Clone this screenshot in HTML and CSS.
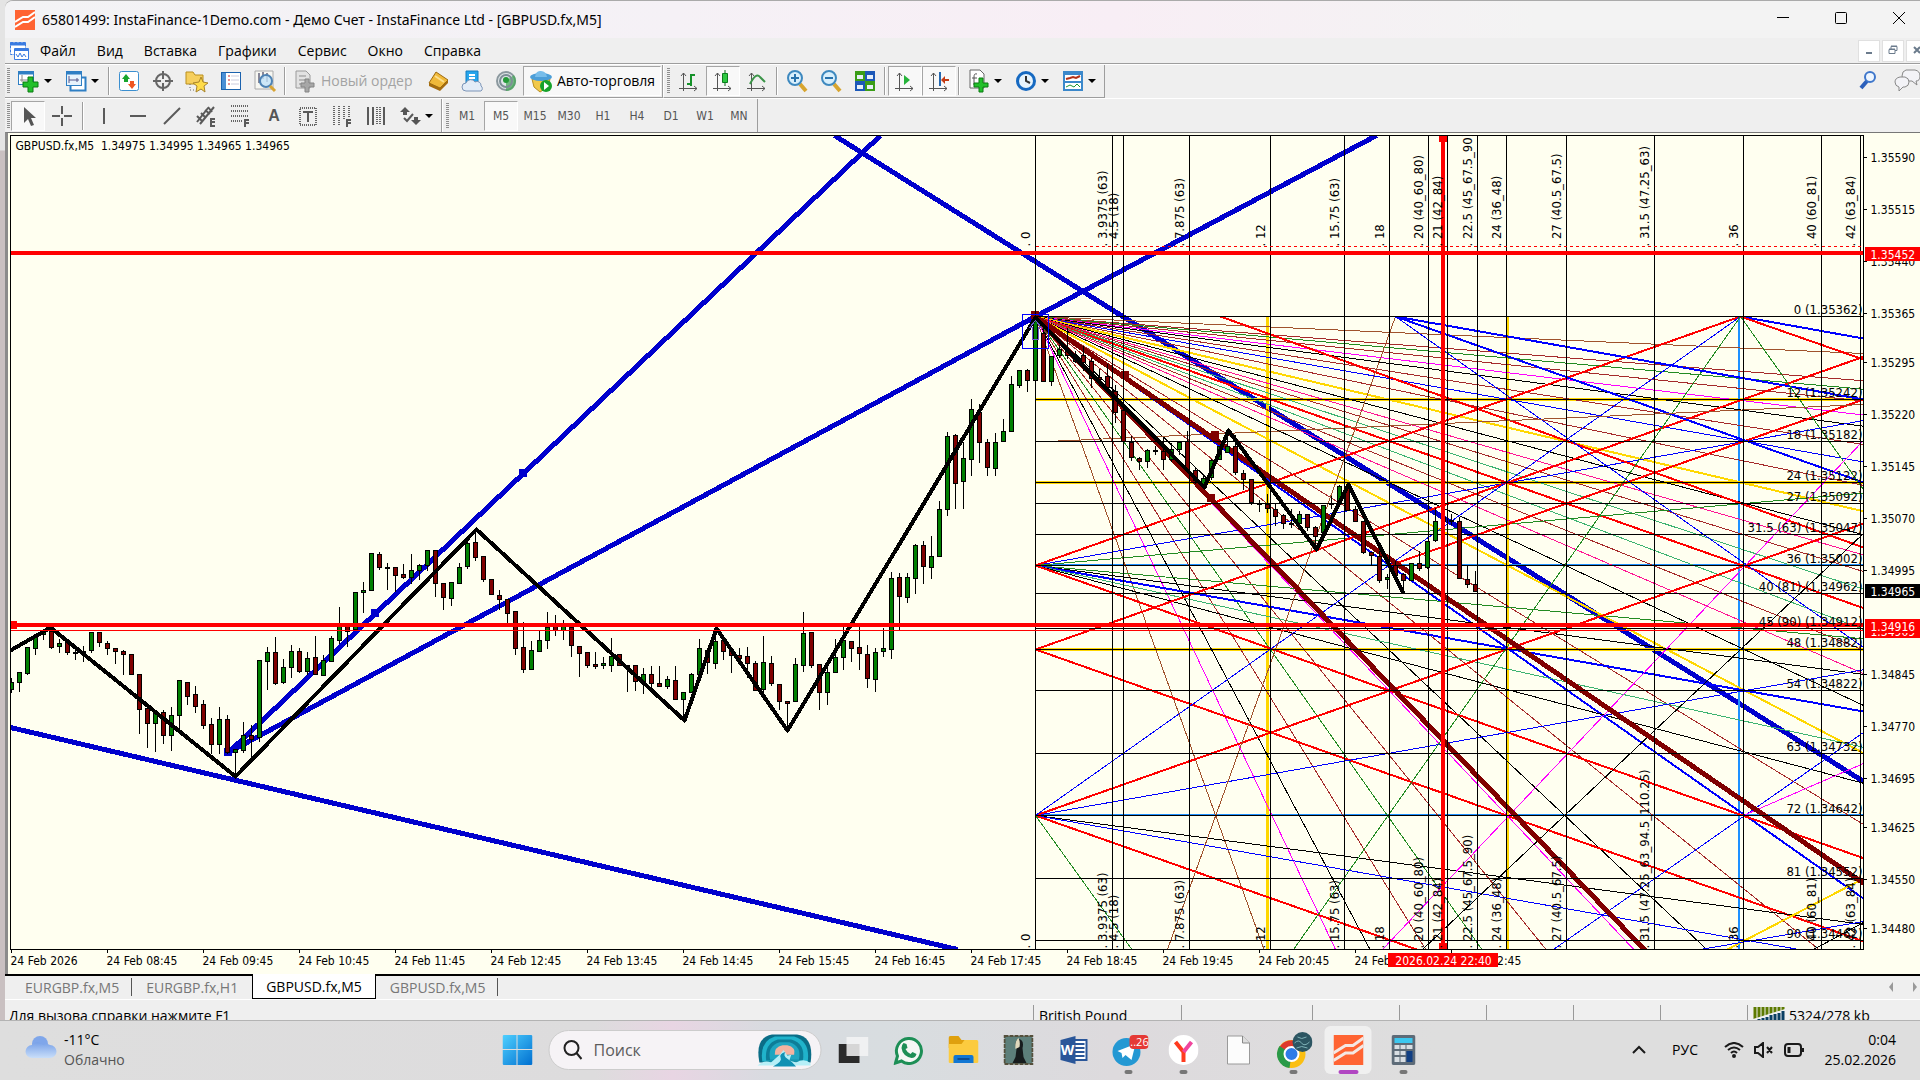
FILE: index.html
```html
<!DOCTYPE html>
<html lang="ru">
<head>
  <meta charset="utf-8">
  <title>65801499: InstaFinance-1Demo.com</title>
  <link rel="stylesheet" href="styles.css">
</head>
<body>
  <div class="window">
    <header class="titlebar">
      <svg class="logo" width="20" height="20" viewBox="0 0 20 20"><path fill="#ff6433" d="M0 0h20v20H0z"/><path fill="none" stroke="#fff" stroke-width="2" d="M0 12l8-5h5l7-5M0 17l8-5h5l7-5"/></svg>
      <h1>65801499: InstaFinance-1Demo.com - Демо Счет - InstaFinance Ltd - [GBPUSD.fx,M5]</h1>
      <div class="win-buttons">
        <button aria-label="Свернуть"><svg width="14" height="14"><path d="M1 6.500h12"/></svg></button>
        <button aria-label="Развернуть"><svg width="14" height="14"><rect x="1.500" y="1.500" width="11" height="11" rx="1"/></svg></button>
        <button aria-label="Закрыть"><svg width="14" height="14"><path d="M1 1l12 12M13 1L1 13"/></svg></button>
      </div>
    </header>

    <nav class="menubar">
      <svg class="menu-icon" width="20" height="20"><g fill="#fff" stroke="#3a7be0"><path d="M1.500 1.500h15v12h-15z" stroke-dasharray="3 1"/><path d="M1 3h16" stroke-width="3"/><path d="M5.500 7.500h14v11h-14z"/><path d="M6 8.500h13" stroke-width="3"/><path fill="none" d="M7 13l2 3 2-4 2 4 2-3 2 3"/></g></svg>
      <button>Файл</button>
      <button>Вид</button>
      <button>Вставка</button>
      <button>Графики</button>
      <button>Сервис</button>
      <button>Окно</button>
      <button>Справка</button>
      <div class="mdi-buttons">
        <button aria-label="Свернуть окно"><svg width="12" height="12"><path d="M3 9h6" stroke-width="2"/></svg></button>
        <button aria-label="Восстановить окно"><svg width="12" height="12"><path d="M2 5.500h6v4H2zM4 5V2.500h6v4H8M2 5h6M4 2h6"/></svg></button>
        <button aria-label="Закрыть окно"><svg width="12" height="12"><path d="M3 3l6 6M9 3l-6 6" stroke-width="2"/></svg></button>
      </div>
    </nav>

    <div class="toolbar">
      <div class="band">
        <span class="grip"></span>
        <button class="tool drop" aria-label="Новый график"><svg width="24" height="24"><rect x="1.500" y="2.500" width="15" height="13" fill="#fff" stroke="#2f7fc4"/><path d="M1 4h16" stroke="#2f7fc4" stroke-width="3"/><path d="M5 6v7M3 11h11" stroke="#888"/><path d="M11 8h5v5h5v5h-5v5h-5v-5H6v-5h5z" fill="#22c02a" stroke="#0a7a12"/></svg></button>
        <button class="tool drop" aria-label="Профили"><svg width="24" height="24"><rect x="6.500" y="8.500" width="15" height="13" fill="#fff" stroke="#2f7fc4" stroke-width="2"/><rect x="2.500" y="2.500" width="15" height="14" fill="#e8f3fc" stroke="#2f7fc4"/><path d="M2 4h16" stroke="#2f7fc4" stroke-width="3"/><path d="M5 7v7M5 11h10M13 9v4" stroke="#558" fill="none"/></svg></button>
        <span class="sep"></span>
        <button class="tool" aria-label="Обзор рынка"><svg width="24" height="24"><rect x="2.500" y="2.500" width="19" height="19" rx="2" fill="#fff" stroke="#3b8fd0"/><path d="M9 5l4 5h-2v3H7v-3H5z" fill="#18a52c"/><path d="M15 20l-4-5h2v-3h4v3h2z" fill="#ef5520"/></svg></button>
        <button class="tool" aria-label="Окно данных"><svg width="24" height="24"><g fill="none" stroke="#666" stroke-width="2"><circle cx="12" cy="12" r="7"/><path d="M12 2v8M12 14v8M2 12h8M14 12h8"/></g></svg></button>
        <button class="tool" aria-label="Навигатор"><svg width="24" height="24"><path d="M1 3h7l2 3h8v9H1z" fill="#f6cf5e" stroke="#b98f1e"/><path d="M5 15v6h5" stroke="#666" fill="none" stroke-dasharray="1 2"/><path d="M16 8l2 5 5 1-4 3 1 6-4-3-5 3 1-6-4-3 6-1z" fill="#ffdc4a" stroke="#a8842a"/></svg></button>
        <button class="tool" aria-label="Терминал"><svg width="24" height="24"><rect x="2.500" y="3.500" width="19" height="17" fill="#fff" stroke="#1b62ae"/><path d="M5 4v16" stroke="#4b8fd4" stroke-width="4"/><path d="M9 7h2M9 11h2M9 15h2" stroke="#c22"/><path d="M12 7h8M12 11h8M12 15h8" stroke="#ccd"/></svg></button>
        <button class="tool" aria-label="Тестер стратегий"><svg width="24" height="24"><path d="M2 2h18v18H2z" fill="#f7f7f2" stroke="#aaa"/><path d="M6 4v10M10 3v7M14 4v9" stroke="#889" stroke-width="2"/><circle cx="13" cy="12" r="6" fill="#bfe1f8" fill-opacity=".8" stroke="#4d82b4" stroke-width="2"/><path d="M17 17l5 5" stroke="#d9a534" stroke-width="3"/></svg></button>
        <span class="sep"></span>
        <button class="tool wide" disabled><svg width="24" height="24"><path d="M3 2h10l4 4v13H3z" fill="#e2e2e2" stroke="#9a9a9a"/><path d="M6 7h7M6 11h7M6 15h4" stroke="#8d8d8d"/><path d="M12 10h4v4h5v4h-5v5h-4v-5H8v-4h4z" fill="#a7a7a7" stroke="#858585"/></svg>Новый ордер</button>
        <button class="tool" aria-label="MetaEditor"><svg width="24" height="24"><path d="M3 14v3l11 5 8-8v-3z" fill="#a66d10"/><path d="M3 14L10 3l12 8-8 8z" fill="#f0b93a" stroke="#9e6b10"/><path d="M9 7l9 6" stroke="#fbdf8d" stroke-width="2"/></svg></button>
        <button class="tool" aria-label="VPS"><svg width="24" height="24"><path d="M6 2h12v16H6z" fill="#25a5ec" stroke="#157fc0"/><path d="M9 6h6M9 9h6" stroke="#fff" stroke-width="2"/><path d="M6 22a4 4 0 010-8 5 5 0 019-1 4 4 0 016 4 3 3 0 010 5z" fill="#e3ecf7" stroke="#7d95b7"/></svg></button>
        <button class="tool" aria-label="Сигналы"><svg width="24" height="24"><circle cx="12" cy="12" r="9" fill="#dfe5e8" stroke="#8b989e" stroke-width="2"/><path d="M12 12v10a10 10 0 008-16z" fill="#41a854" fill-opacity=".7"/><circle cx="12" cy="12" r="6" fill="none" stroke="#7d8f96" stroke-width="2"/><circle cx="12" cy="11" r="3" fill="#259a39"/></svg></button>
        <button class="tool auto pressed"><svg width="24" height="24"><path d="M3 10h18l-2 8-8 5-6-5z" fill="#f2c94a" stroke="#b78e22"/><ellipse cx="12" cy="8" rx="11" ry="4" fill="#4b9ed8"/><path d="M6 8q1-7 6-6 5 0 6 6z" fill="#77bdea"/><circle cx="17" cy="17" r="6" fill="#17a22b"/><path d="M15 13l5 4-5 4z" fill="#fff"/></svg>Авто-торговля</button>
      </div>
      <div class="band">
        <span class="grip"></span>
        <button class="tool" aria-label="Бары"><svg width="24" height="24"><path class="ax" d="M6.500 4v18M2 19.500h18M4 7l2.500-3 2.500 3M17 17l3 2.500-3 2.500"/><path d="M14 5v12M14 6h4M10 15h4" stroke="#15922a" stroke-width="2"/></svg></button>
        <button class="tool pressed" aria-label="Японские свечи"><svg width="24" height="24"><path class="ax" d="M6.500 4v18M2 19.500h18M4 7l2.500-3 2.500 3M17 17l3 2.500-3 2.500"/><path d="M14 1v16" stroke="#0b6c1a"/><path d="M11.500 4.500h5v9h-5z" fill="#2dc940" stroke="#0b7c1d"/></svg></button>
        <button class="tool" aria-label="Линия"><svg width="24" height="24"><path class="ax" d="M6.500 4v18M2 19.500h18M4 7l2.500-3 2.500 3M17 17l3 2.500-3 2.500"/><path d="M5 15q6-12 10-7l5 5" fill="none" stroke="#3b9448" stroke-width="2"/></svg></button>
        <span class="sep"></span>
        <button class="tool" aria-label="Увеличить"><svg width="24" height="24"><path d="M15 15l6 7" stroke="#d7a52f" stroke-width="4"/><circle cx="10" cy="9" r="7" fill="#d8effc" stroke="#3e89bf" stroke-width="2"/><path d="M6 9h8M10 5v8" stroke="#2872ac" stroke-width="2"/></svg></button>
        <button class="tool" aria-label="Уменьшить"><svg width="24" height="24"><path d="M15 15l6 7" stroke="#d7a52f" stroke-width="4"/><circle cx="10" cy="9" r="7" fill="#d8effc" stroke="#3e89bf" stroke-width="2"/><path d="M6 9h8" stroke="#2872ac" stroke-width="2"/></svg></button>
        <button class="tool" aria-label="Плитка"><svg width="24" height="24"><path d="M2 2h10v10H2zM12 12h10v10H12z" fill="#3a9d17"/><path d="M12 2h10v10H12zM2 12h10v10H2z" fill="#1c58b8"/><path d="M4 6h6v4H4zM14 6h6v4h-6zM4 16h6v4H4zM14 16h6v4h-6z" fill="#e6f0fa"/></svg></button>
        <span class="sep"></span>
        <button class="tool pressed" aria-label="Автопрокрутка"><svg width="24" height="24"><path class="ax" d="M6.500 4v18M2 19.500h18M4 7l2.500-3 2.500 3M17 17l3 2.500-3 2.500"/><path d="M11 6l6 5-6 5z" fill="#26b33a"/></svg></button>
        <button class="tool pressed" aria-label="Сдвиг графика"><svg width="24" height="24"><path class="ax" d="M6.500 4v18M2 19.500h18M4 7l2.500-3 2.500 3M17 17l3 2.500-3 2.500"/><path d="M13 3v14" stroke="#2468b0" stroke-width="2"/><path d="M14 11l4-4v3h4v2h-4v3z" fill="#c43a12"/></svg></button>
        <span class="sep"></span>
        <button class="tool drop" aria-label="Индикаторы"><svg width="24" height="24"><path d="M3 1h10l4 4v14H3z" fill="#fff" stroke="#666"/><path d="M10 5q-3-1-3 3v8M5 9h5" stroke="#555" fill="none"/><path d="M12 9h4v5h5v4h-5v5h-4v-5H7v-4h5z" fill="#22c02a" stroke="#0a7a12"/></svg></button>
        <button class="tool drop" aria-label="Периоды"><svg width="24" height="24"><circle cx="12" cy="12" r="10" fill="#1669c1"/><circle cx="12" cy="12" r="7" fill="#e7f4fd"/><path d="M12 7v5l4 2" fill="none" stroke="#333" stroke-width="2"/></svg></button>
        <button class="tool drop" aria-label="Шаблоны"><svg width="24" height="24"><path d="M2 2h20v20H2z" fill="#3b88cb"/><path d="M4 6h16v6H4zM4 14h16v6H4z" fill="#fff"/><path d="M5 10l4-1 3-1 3 1 4-2" fill="none" stroke="#b33016" stroke-width="2"/><path d="M5 18l4-2 4 2 3-3 3 3" fill="none" stroke="#1e9632"/></svg></button>
      </div>
      <div class="right-tools">
        <button class="tool" aria-label="Поиск"><svg width="20" height="20"><path d="M9 11l-6 7" stroke="#2c60bb" stroke-width="4"/><circle cx="12" cy="7" r="5" fill="#eef6ff" stroke="#3e76cb" stroke-width="2"/></svg></button>
        <button class="tool" aria-label="Чат"><svg width="28" height="24"><g fill="#f3f3f7" stroke="#888"><path d="M12 2h9q5 1 5 6t-4 5l1 4-5-4h-6q-4-1-4-5 0-5 4-6z"/><path d="M6 9h5q4 1 4 5t-4 5H9l-4 4v-4q-4-1-4-5t5-5z"/></g></svg></button>
      </div>
    </div>

    <div class="toolbar objects">
      <div class="band">
        <span class="grip"></span>
        <button class="tool pressed" aria-label="Курсор"><svg width="24" height="24"><path d="M8 3v16l4-4 3 7 3-1-3-7h5z" fill="#555"/></svg></button>
        <button class="tool" aria-label="Перекрестие"><svg width="24" height="24"><path class="ink" d="M12 2v8M12 14v8M2 12h8M14 12h8"/></svg></button>
        <span class="sep"></span>
        <button class="tool" aria-label="Вертикальная линия"><svg width="24" height="24"><path class="ink" d="M12 4v16"/></svg></button>
        <button class="tool" aria-label="Горизонтальная линия"><svg width="24" height="24"><path class="ink" d="M4 12h16"/></svg></button>
        <button class="tool" aria-label="Трендовая линия"><svg width="24" height="24"><path class="ink" d="M4 20L20 4"/></svg></button>
        <button class="tool" aria-label="Канал"><svg width="24" height="24"><path class="ink" d="M3 18L14 4M6 20L20 3M3 12l5 5M7 9l5 5M11 6l5 4M14 3l4 5"/><path class="ink" d="M21 15h-4v7h4M17 18h4"/></svg></button>
        <button class="tool" aria-label="Фибоначчи"><svg width="24" height="24"><path class="dots" d="M3 2h18M3 7h18M3 12h18M3 17h11"/><path class="ink" d="M21 16h-4v7M17 19h4"/></svg></button>
        <button class="tool glyph" aria-label="Текст">A</button>
        <button class="tool" aria-label="Метка"><svg width="24" height="24"><path class="dots" d="M4 4h16v17H4z"/><path class="ink" d="M7 8h10M12 8v10"/></svg></button>
        <button class="tool" aria-label="Временные зоны"><svg width="24" height="24"><path class="dots" d="M4 2v19M9 2v19M14 2v14M19 2v12"/><path class="ink" d="M21 16h-4v7M17 19h4"/></svg></button>
        <button class="tool" aria-label="Циклы"><svg width="24" height="24"><path class="ink" d="M4 3v18M9 3v18M20 3v18"/><path class="dots" d="M13 3v18M16 3v18"/></svg></button>
        <button class="tool drop" aria-label="Стрелки"><svg width="24" height="24"><path d="M7 3l5 5H9v3H5V8H2zM18 21l-5-5h3v-3h4v3h3z" fill="#555"/><path class="ink" d="M6 14l3 3 6-7"/></svg></button>
      </div>
      <div class="band">
        <span class="grip"></span>
        <button class="tool tf">M1</button>
        <button class="tool tf pressed">M5</button>
        <button class="tool tf">M15</button>
        <button class="tool tf">M30</button>
        <button class="tool tf">H1</button>
        <button class="tool tf">H4</button>
        <button class="tool tf">D1</button>
        <button class="tool tf">W1</button>
        <button class="tool tf">MN</button>
      </div>
    </div>

    <main class="chart"><svg id="chart"></svg></main>

    <div class="tabs">
      <button class="tab">EURGBP.fx,M5</button>
      <button class="tab">EURGBP.fx,H1</button>
      <button class="tab active">GBPUSD.fx,M5</button>
      <button class="tab">GBPUSD.fx,M5</button>
      <div class="tab-arrows">
        <button aria-label="Назад"><svg width="6" height="12"><path d="M5 1v10L1 6z"/></svg></button>
        <button aria-label="Вперед"><svg width="6" height="12"><path d="M1 1v10l4-5z"/></svg></button>
      </div>
    </div>

    <footer class="status">
      <span class="help">Для вызова справки нажмите F1</span>
      <span class="cell profile">British Pound</span>
      <span class="cell bar"></span>
      <span class="cell"></span>
      <span class="cell"></span>
      <span class="cell"></span>
      <span class="cell"></span>
      <span class="cell"></span>
      <span class="cell net"><svg width="32" height="20"><path d="M2 0v20M6 0v20M10 0v20M14 0v20M18 0v20M22 0v20M26 0v20M30 0v20" stroke="#5c7a00" stroke-width="3"/><path d="M0 12L32 2v18H0z" fill="#efefef"/><path d="M2 20v-6M6 20v-8M10 20v-9M14 20V10M18 20V8M22 20V7M26 20V6M30 20V4" stroke="#0a3f63" stroke-width="3"/></svg>5324/278 kb</span>
    </footer>
  </div>

  <div class="taskbar">
    <div class="weather">
      <svg width="32" height="24" viewBox="0 0 32 24"><defs><linearGradient id="cl" x2="0" y2="1"><stop offset="0" stop-color="#78a1e8"/><stop offset="1" stop-color="#c9def9"/></linearGradient></defs><circle cx="15" cy="9" r="8" fill="#7fa6ea"/><path d="M7 23a6 6 0 010-13 7 7 0 0111 0 7 7 0 017 0 6 6 0 010 13z" fill="url(#cl)"/></svg>
      <div><p>-11°C</p><p class="dim">Облачно</p></div>
    </div>
    <div class="apps">
      <button class="app" aria-label="Пуск"><svg width="30" height="30"><defs><linearGradient id="wn" x2="1" y2="1"><stop offset="0" stop-color="#4fd0ff"/><stop offset="1" stop-color="#006fd0"/></linearGradient></defs><path d="M1 0h13v14H0V1zM15 0h14l1 1v13H15zM0 15h14v15H1l-1-1zM15 15h15v14l-1 1H15z" fill="url(#wn)"/></svg></button>
      <label class="search">
        <svg width="20" height="20"><circle cx="9" cy="8" r="7" fill="none" stroke="#222" stroke-width="2"/><path d="M14 13l5 6" stroke="#222" stroke-width="2"/></svg>
        <input type="text" placeholder="Поиск" aria-label="Поиск">
        <svg width="56" height="34" viewBox="0 0 58 34"><path d="M3 30Q-2 4 16 1h26q18 3 14 29z" fill="#0b6d87"/><path d="M6 29Q3 8 19 3h20q17 5 14 26z" fill="#20b3cb"/><path d="M10 28Q8 10 22 6h14q15 4 12 22z" fill="#0d7d98"/><path d="M14 27Q11 13 24 9h10q13 4 10 18z" fill="#1fa5c0"/><path d="M19 22q-1-8 8-10h5q9 2 7 10z" fill="#f4b3a0"/><path d="M1 33q7-6 14-3l9-8 4-5 4 6 4-1-2 6 7 2q9-5 15 1v2z" fill="#b6eff7"/><path d="M17 34q10-5 8-9t5-6q-3 4 2 7t9 8z" fill="#1191b3"/></svg>
      </label>
      <button class="app" aria-label="Представление задач"><svg width="30" height="30"><path d="M0 9h21v19H0z" fill="#2b2b2b"/><path d="M8 2h22v19H8z" fill="#f5f5f5" fill-opacity=".85"/></svg></button>
      <button class="app" aria-label="WhatsApp"><svg width="30" height="30"><path d="M2 28l2-7a12.500 12.500 0 114 5z" fill="#f4f8f5" stroke="#1d8f56" stroke-width="3"/><path d="M10 8l3 1 1 4-2 1q2 4 5 5l2-2 4 2q-1 4-5 4-9-2-10-10 0-3 2-5z" fill="#1d8f56"/></svg></button>
      <button class="app" aria-label="Проводник"><svg width="30" height="30"><path d="M0 3q0-2 2-2h8l3 4h15v8H0z" fill="#dfa00e"/><path d="M0 9h13l3-4h12q2 0 2 2v20q0 1-2 1H2q-2 0-2-1z" fill="#fccb3f"/><path d="M5 28v-6q0-2 2-2h16q2 0 2 2v6z" fill="#1277d3"/><path d="M9 24h12" stroke="#0b4d94" stroke-width="2"/></svg></button>
      <button class="app" aria-label="Шахматы"><svg width="30" height="30"><path d="M1 1h28v28H1z" fill="#5d7f7a" stroke="#55503c" stroke-width="2" stroke-dasharray="4 1"/><path d="M9 28l3-6 1-8q-3-8 2-10 6 1 4 9l1 9 3 6z" fill="#171c1d"/><path d="M12 14q-1-8 3-11 2 4 1 9z" fill="#e0d8bc"/></svg></button>
      <button class="app" aria-label="Word"><svg width="30" height="30"><path d="M14 5h14v20H14z" fill="#fff" stroke="#2a5699" stroke-width="2"/><path d="M16 9h10M16 13h10M16 17h10M16 21h10" stroke="#2a5699" stroke-width="2"/><path d="M2 5l15-4v28L2 25z" fill="#2a5699"/><text x="9" y="20" text-anchor="middle" fill="#fff" font-size="14" font-weight="700" font-family="Open Sans, sans-serif">W</text></svg></button>
      <button class="app dot" aria-label="Telegram"><svg width="40" height="34"><circle cx="18" cy="19" r="14" fill="#2498d3"/><path d="M9 18l18-7-4 16-6-5-3 3-1-5z" fill="#fff"/><rect x="21" y="2" width="19" height="14" rx="4" fill="#e53935"/><text x="31" y="13" text-anchor="middle" fill="#fff" font-size="11" font-family="Open Sans, sans-serif">..26</text></svg></button>
      <button class="app dot" aria-label="Яндекс"><svg width="30" height="30"><circle cx="15" cy="15" r="15" fill="#fff"/><path d="M7 7l8 10v10" fill="none" stroke="#ff3b1f" stroke-width="4"/><path d="M23 7l-8 10" stroke="#f0459d" stroke-width="4"/></svg></button>
      <button class="app" aria-label="Документ"><svg width="24" height="30"><path d="M1 1h15l7 7v21H1z" fill="#fcfcfc" stroke="#9a9a9a"/><path d="M16 1v7h7" fill="#ddd" stroke="#888"/></svg></button>
      <button class="app dot" aria-label="Chrome"><svg width="38" height="38"><circle cx="17" cy="23" r="14" fill="#fbbf12"/><path d="M17 23L5 16a14 14 0 0124 0z" fill="#de3a2d"/><path d="M17 23l-2 14A14 14 0 015 15z" fill="#2a9a48"/><circle cx="17" cy="23" r="7" fill="#2f7ce8" stroke="#fff" stroke-width="2"/><circle cx="28" cy="11" r="10" fill="#2c5562"/><path d="M20 12q4-4 7 0t8-1M23 6q4 3 9 0M22 17q5-3 11 0" fill="none" stroke="#7fb2b8"/></svg></button>
      <button class="app current" aria-label="InstaFinance"><svg width="30" height="30" viewBox="0 0 20 20"><path fill="#ff6433" d="M0 0h20v20H0z"/><path fill="none" stroke="#f4e8e4" stroke-width="2" d="M0 12l8-5h5l7-5M0 17l8-5h5l7-5"/></svg></button>
      <button class="app dot" aria-label="Калькулятор"><svg width="24" height="30"><rect width="24" height="30" rx="2" fill="#5d6b78"/><path d="M3 3h18v5H3z" fill="#3cc8f0"/><path d="M3 10h5v4H3zM9 10h5v4H9zM15 10h6v4h-6zM3 16h5v4H3zM9 16h5v4H9zM3 22h5v5H3zM9 22h5v5H9z" fill="#d8dee3"/><path d="M15 16h6v11h-6z" fill="#103f84"/></svg></button>
    </div>
    <div class="tray">
      <svg width="14" height="10"><path d="M1 8l6-6 6 6"/></svg>
      <span class="lang">РУС</span>
      <svg width="20" height="16"><path d="M1 5q9-8 18 0M4 8q6-5 12 0M7 11q3-3 6 0"/><circle cx="10" cy="14" r="1"/></svg>
      <svg width="20" height="16"><path d="M1 5h3l5-4v14l-5-4H1zM13 5l5 6M18 5l-5 6"/></svg>
      <svg width="20" height="14"><rect x="1" y="1" width="16" height="12" rx="3"/><path d="M5 4v6M19 5v4" stroke-width="3"/></svg>
      <div class="clock"><p>0:04</p><p>25.02.2026</p></div>
    </div>
  </div>
  <script src="chart.js"></script>
</body>
</html>
```

FILE: styles.css
```css
* {
  box-sizing: border-box;
}

body {
  margin: 0;
  height: 100vh;
  display: flex;
  flex-direction: column;
  overflow: hidden;
  background: linear-gradient(#e4e4e4 0, #e4e4e4 150px, #c9c0c1 151px);
  color: #000;
  font: 14px/18px "Open Sans", "Noto Sans", sans-serif;
}

h1, p {
  margin: 0;
}

button {
  border: 0;
  padding: 0;
  margin: 0;
  background: none;
  color: inherit;
  font: inherit;
}

.window {
  flex: 1;
  min-height: 0;
  margin-left: 5px;
  display: flex;
  flex-direction: column;
  background: #efefef;
  border-top: 1px solid #aaa;
  border-radius: 8px 0 0 0;
}

/* title and menu */
.titlebar {
  height: 37px;
  display: flex;
  align-items: center;
  padding-left: 10px;
  background: linear-gradient(90deg, #f3f3f5 0, #f5f1f6 35%, #f8eef5 58%, #f3f3f3 80%);
  border-radius: 8px 0 0 0;
}

.titlebar h1 {
  margin-left: 7px;
  font: 400 14px/18px "Noto Sans", "Open Sans", sans-serif;
}

.win-buttons {
  margin: 0 -8px 0 auto;
  display: flex;
}

.win-buttons button {
  width: 58px;
  height: 36px;
}

.win-buttons svg {
  fill: none;
  stroke: #000;
}

.menubar {
  height: 26px;
  display: flex;
  align-items: center;
  gap: 1px;
  padding-left: 4px;
  border-bottom: 1px solid #9d9d9d;
}

.menubar > button {
  padding: 0 10px;
}

.mdi-buttons {
  margin: 0 -8px 0 auto;
  display: flex;
  gap: 2px;
}

.mdi-buttons button {
  width: 22px;
  height: 22px;
  background: #fff;
  border: 1px solid #e0e0e0;
}

.mdi-buttons svg {
  fill: none;
  stroke: #6b7b8c;
}

/* toolbars */
.toolbar {
  height: 34px;
  display: flex;
  border-top: 1px solid #fff;
}

.band {
  display: flex;
  align-items: center;
  padding: 0 1px 0 2px;
  border-right: 1px solid #9d9d9d;
  border-bottom: 1px solid #9d9d9d;
}

.objects .band {
  border-bottom: 0;
}

.band + .band {
  padding-left: 3px;
  border-left: 1px solid #fff;
}

.grip {
  width: 3px;
  height: 26px;
  margin-right: 2px;
  background: repeating-linear-gradient(#8f8f8f 0 1px, #efefef 1px 2px);
}

.objects .grip {
  margin-right: 1px;
}

.sep {
  width: 2px;
  height: 28px;
  margin: 0 2px;
  border-left: 1px solid #9d9d9d;
  border-right: 1px solid #fff;
}

.objects .sep {
  margin: 0 3px;
}

.tool {
  width: 34px;
  height: 30px;
  display: flex;
  align-items: center;
  justify-content: center;
}

.drop {
  width: 47px;
  justify-content: flex-start;
  padding-left: 5px;
}

.drop::after {
  content: "";
  margin-left: 3px;
  border: 4px solid transparent;
  border-top-color: #000;
  border-bottom: 0;
}

.wide {
  width: 133px;
  justify-content: flex-start;
  padding-left: 5px;
  gap: 4px;
  color: #a3a3a3;
}

.auto {
  width: 138px;
  gap: 4px;
}

.pressed {
  background: #f8f8f8;
  border: 1px solid #a5a5a5;
  border-right-color: #fff;
  border-bottom-color: #fff;
}

.ax {
  fill: none;
  stroke: #555;
}

.ink {
  fill: none;
  stroke: #5a5a5a;
  stroke-width: 2;
}

.dots {
  fill: none;
  stroke: #666;
  stroke-width: 2;
  stroke-dasharray: 1 1;
}

.glyph {
  font: 700 16px "Liberation Sans", sans-serif;
  color: #555;
}

.tf {
  font: 12px "DejaVu Sans Condensed", "DejaVu Sans", sans-serif;
  color: #555;
}

.right-tools {
  margin-left: auto;
  margin-right: -5px;
  display: flex;
  gap: 6px;
}

/* chart */
.chart {
  flex: 1;
  min-height: 0;
  display: flex;
  background: #fffff0;
  border-top: 1px solid #777;
  border-left: 3px solid #8b8b8b;
}

.chart svg {
  width: 100%;
  height: 100%;
  font: 12px "DejaVu Sans Condensed", "DejaVu Sans", sans-serif;
}

.chart .level {
  font-size: 13px;
}

/* chart tabs */
.tabs {
  height: 26px;
  display: flex;
  gap: 1px;
  padding-left: 7px;
  border-top: 2px solid #000;
  border-bottom: 1px solid #fff;
}

.tab {
  height: 23px;
  padding: 0 13px;
  color: #777;
  position: relative;
}

.tab:first-child::after,
.tab:nth-child(4)::after {
  content: "";
  position: absolute;
  right: 0;
  top: 2px;
  height: 18px;
  border-right: 1px solid #555;
}

.tab.active {
  margin-top: -2px;
  height: 25px;
  padding-top: 2px;
  background: #fff;
  color: #000;
  border: 1px solid #000;
  border-top: 0;
}

.tab-arrows {
  margin: 0 2px 0 auto;
  display: flex;
  gap: 18px;
}

.tab-arrows svg {
  fill: #999;
}

/* status bar */
.status {
  height: 20px;
  display: flex;
  padding: 5px 0 0 4px;
  overflow: hidden;
  line-height: 22px;
}

.help {
  flex: 1;
}

.cell {
  width: 87px;
  border-left: 1px solid #999;
}

.profile {
  width: 148px;
  padding-left: 5px;
}

.bar {
  width: 131px;
}

.net {
  width: 173px;
  display: flex;
  align-items: flex-start;
  gap: 4px;
  padding-left: 5px;
}

.net svg {
  margin-top: 2px;
}

/* taskbar */
.taskbar {
  position: relative;
  height: 60px;
  display: flex;
  align-items: center;
  justify-content: space-between;
  padding: 0 24px 1px 25px;
  border-top: 1px solid #b3b3b3;
  background: linear-gradient(90deg, #dedede 0, #dddcdd 31%, #e8d5e3 35%, #d8dbe0 40%, #d8dde0 46%, #dddadd 58%, #dedede 75%);
}

.weather {
  display: flex;
  align-items: center;
  gap: 7px;
  line-height: 20px;
}

.weather svg {
  margin-bottom: 6px;
}

.dim {
  color: #555;
}

.apps {
  position: absolute;
  left: 50%;
  transform: translateX(-50%);
  display: flex;
  align-items: center;
}

.app {
  width: 47px;
  height: 48px;
  margin: 0 4px;
  display: flex;
  align-items: center;
  justify-content: center;
  position: relative;
}

.app svg {
  flex: none;
}

.dot::after,
.current::after {
  content: "";
  position: absolute;
  bottom: 0;
  width: 8px;
  height: 4px;
  border-radius: 2px;
  background: #777;
}

.current {
  background: #f0f0f0;
  border-radius: 6px;
}

.current::after {
  width: 20px;
  background: #b146c2;
}

.search {
  width: 273px;
  height: 40px;
  margin: 0 4px;
  display: flex;
  align-items: center;
  gap: 11px;
  padding: 0 8px 0 13px;
  background: #f6f3f6;
  border: 1px solid #ccc;
  border-radius: 20px;
}

.search input {
  flex: 1;
  min-width: 0;
  border: 0;
  padding: 0;
  background: none;
  font: 16px "Open Sans", "Noto Sans", sans-serif;
}

.search input::placeholder {
  color: #5c5c5c;
}

.tray {
  margin-left: auto;
  display: flex;
  align-items: center;
  gap: 10px;
}

.tray svg {
  fill: none;
  stroke: #1a1a1a;
  stroke-width: 2;
}

.lang {
  margin: 0 16px;
}

.clock {
  width: 82px;
  text-align: right;
  line-height: 20px;
}
```

FILE: chart.js
```js
var svg = document.getElementById('chart');

var X0 = 1035, RIGHT = 1863, TOP = 135, BOTTOM = 949;
var out = [];

function line(x1, y1, x2, y2, color, w, extra) {
  out.push('<line x1="' + x1 + '" y1="' + y1 + '" x2="' + x2 + '" y2="' + y2 +
    '" stroke="' + color + '" stroke-width="' + (w || 1) + '" ' + (extra || '') + '/>');
}
function box(x, y, w, h, color) {
  out.push('<rect x="' + (x - 0.5) + '" y="' + (y - 0.5) + '" width="' + w + '" height="' + h + '" fill="' + color + '"/>');
}
function text(x, y, str, extra) {
  out.push('<text x="' + x + '" y="' + y + '" ' + (extra || '') + '>' + str + '</text>');
}
// ray from a point to the right edge
function ray(x, y, slope, color, w) {
  line(x, y, RIGHT, y + (RIGHT - x) * slope, color, w);
}

// horizontal levels: y, label
var levels = [
  [316, '0 (1.35362)'], [399, '12 (1.35242)'], [441, '18 (1.35182)'], [482, '24 (1.35122)'],
  [503, '27 (1.35092)'], [534, '31.5 (63) (1.35047)'], [565, '36 (1.35002)'], [593, '40 (81) (1.34962)'],
  [628, '45 (90) (1.34912)'], [649, '48 (1.34882)'], [690, '54 (1.34822)'], [753, '63 (1.34732)'],
  [815, '72 (1.34642)'], [878, '81 (1.34552)'], [940, '90 (1.34462)']
];
// vertical time lines: x, label, label at the bottom when it differs
var times = [
  [1035, '0'], [1112, '3.9375 (63)'], [1123, '4.5 (18)'], [1189, '7.875 (63)'], [1270, '12'],
  [1344, '15.75 (63)'], [1389, '18'], [1428, '20 (40_60_80)'], [1447, '21 (42_84)'],
  [1477, '22.5 (45_67.5_90)'], [1506, '24 (36_48)'], [1566, '27 (40.5_67.5)'],
  [1654, '31.5 (47.25_63)', '31.5 (47.25_63_94.5_110.25)'], [1743, '36'], [1821, '40 (60_81)'], [1860, '42 (63_84)']
];

// candles from x = 11 with a step of 8: high, body top, body bottom, low, up
var candles = [
  [677,682,689,692,1],[671,672,682,691,1],[647,647,673,674,1],[635,635,648,654,1],[631,631,634,639,1],
  [628,631,647,648,0],[638,643,646,652,1],[641,641,652,654,0],[645,652,653,659,1],[645,651,654,661,0],
  [631,632,650,652,1],[632,632,642,646,0],[640,643,648,654,0],[648,648,651,663,0],[649,651,654,674,0],
  [654,654,674,674,0],[673,674,709,733,0],[708,708,723,747,0],[710,711,723,751,1],[709,712,735,743,0],
  [706,715,735,750,1],[679,680,715,728,1],[681,682,696,704,0],[685,694,706,712,0],[699,704,725,728,0],
  [717,724,744,753,0],[706,719,744,753,1],[714,719,752,753,0],[749,749,752,775,1],[721,735,750,752,1],
  [724,735,739,758,0],[659,660,737,741,1],[646,652,661,689,1],[636,652,683,684,0],[658,667,682,683,1],
  [644,651,667,677,1],[647,651,671,672,0],[651,658,671,674,1],[635,657,674,674,0],[654,660,675,675,1],
  [635,638,661,661,1],[606,626,640,643,1],[626,626,631,646,0],[592,592,629,629,1],[581,590,592,612,1],
  [553,553,590,590,1],[551,554,567,569,0],[562,567,568,589,0],[567,567,575,591,0],[563,574,577,578,0],
  [553,570,577,583,1],[563,565,570,579,1],[549,550,565,570,1],[550,550,583,596,0],[583,583,597,609,0],
  [581,582,598,605,1],[562,567,583,583,1],[539,543,566,568,1],[530,542,557,560,0],[555,556,579,581,0],
  [579,579,594,594,0],[589,595,599,609,0],[599,599,613,624,0],[611,611,648,654,0],[621,647,669,672,0],
  [640,650,669,669,1],[629,640,651,651,1],[611,627,640,648,1],[614,626,630,635,0],[619,626,630,639,1],
  [625,627,645,656,0],[646,646,653,676,0],[652,652,665,667,0],[651,664,666,668,0],[656,663,665,668,1],
  [637,656,665,671,1],[654,654,665,665,0],[665,665,666,691,0],[665,665,681,690,0],[667,674,682,693,1],
  [665,674,683,688,0],[665,683,686,686,0],[675,679,686,688,1],[665,680,699,699,0],[692,692,699,720,1],
  [672,674,692,692,1],[638,648,674,674,1],[647,650,662,673,0],[628,641,663,668,1],[640,640,651,659,0],
  [651,651,655,672,0],[647,655,658,658,0],[646,656,663,677,0],[660,663,690,690,0],[635,662,689,692,1],
  [655,663,683,685,0],[684,684,701,709,0],[700,701,703,728,0],[657,664,701,701,1],[611,633,665,671,1],
  [632,632,665,667,0],[663,664,692,709,0],[665,672,692,704,1],[638,657,672,672,1],[625,640,657,669,1],
  [640,641,648,661,0],[625,647,653,669,0],[644,654,678,687,0],[647,652,679,691,1],[627,648,651,656,1],
  [571,578,649,658,1],[572,577,596,630,0],[572,577,597,602,1],[543,545,578,593,1],[540,545,566,583,0],
  [535,556,567,578,1],[500,509,556,556,1],[431,436,509,515,1],[433,435,483,508,0],[441,458,481,508,1],
  [398,409,459,475,1],[403,412,442,462,0],[438,442,467,475,0],[432,442,468,475,1],[418,431,441,441,1],
  [375,384,431,431,1],[369,370,385,387,1],[368,370,380,391,0],[313,318,380,380,1],[326,333,381,381,0],
  [355,356,381,385,1],[344,349,355,357,1],[327,350,355,358,0],[350,357,361,362,0],[345,355,362,370,0],
  [357,361,378,387,0],[368,377,379,385,0],[363,376,387,392,0],[384,391,412,422,0],[402,410,441,441,0],
  [435,442,457,460,0],[456,458,461,469,0],[448,450,461,467,1],[445,450,451,454,0],[437,451,459,469,0],
  [442,449,459,461,1],[440,442,449,454,1],[430,441,470,470,0],[466,470,480,483,0],[475,478,485,487,1],
  [458,460,477,479,1],[446,446,459,459,1],[430,446,452,452,1],[434,446,472,474,0],[469,473,479,489,0],
  [479,479,502,504,0],[499,503,504,511,0],[493,504,508,512,0],[503,509,516,525,0],[513,515,523,528,0],
  [508,523,524,527,0],[510,514,523,525,1],[514,514,527,530,0],[525,527,536,548,0],[504,505,532,540,1],
  [495,503,504,508,0],[484,486,503,505,1],[485,487,510,510,0],[505,509,521,521,0],[521,521,552,553,0],
  [552,552,555,564,0],[550,556,580,582,0],[573,577,579,588,1],[560,565,575,577,0],[572,574,580,592,0],
  [563,563,580,580,1],[550,563,568,570,0],[540,541,567,568,1],[507,521,540,541,1],[508,517,521,524,1],
  [513,520,521,524,0],[516,521,578,578,0],[564,579,584,587,0],[570,584,591,591,0]
];

out.push('<defs><clipPath id="plot"><rect x="10" y="135" width="1853" height="814"/></clipPath></defs>');
out.push('<g transform="translate(-7.5 -132.5)">');
out.push('<g clip-path="url(#plot)" shape-rendering="crispEdges">');

// trend lines
line(228, 752, 880, 135, '#0000cd', 5);
line(228, 752, X0, 316, '#0000cd', 5);
line(X0, 316, 1376, 135, '#0000cd', 5);
line(834, 135, RIGHT, 781, '#0000cd', 5);
line(10, 727, 957, 949, '#0000cd', 5);
[[228, 752], [375, 613], [523, 473]].forEach(function (p) {
  box(p[0] - 4, p[1] - 4, 8, 8, '#0000cd');
});

// coloured square grid
[399, 482, 649].forEach(function (y) { line(X0, y, RIGHT, y, '#ffd700', 3); });
[565, 815].forEach(function (y) { line(X0, y - 1, RIGHT, y - 1, '#1e90ff', 2); });
line(1267, 316, 1267, BOTTOM, '#ffd700', 3);
line(1507, 316, 1507, BOTTOM, '#ffd700', 3);
line(1738, 316, 1738, BOTTOM, '#1e90ff', 2);

// main fan from the high
[
  [.0447, '#a0522d'], [.0776, '#a52a2a'], [.0878, '#228b22'], [.102, '#a52a2a'], [.119, '#ff00ff'],
  [.1325, '#000'], [.1546, '#a52a2a'], [.1757, '#0000ff'], [.204, '#a52a2a'], [.2353, '#ffd700', 2],
  [.2635, '#000'], [.288, '#ff1493'], [.308, '#a52a2a'], [.3294, '#3cb371'], [.3522, '#ff0000', 2],
  [.378, '#3cb371'], [.403, '#a52a2a'], [.4313, '#ff1493'], [.4698, '#000'], [.5274, '#ffd700', 2],
  [.6135, '#a52a2a'], [.703, '#0000ff', 2], [.808, '#a52a2a'], [.943, '#000'], [1.058, '#ff00ff'],
  [1.24, '#a52a2a'], [1.418, '#228b22'], [1.622, '#a52a2a'], [1.892, '#000'], [2.11, '#ff00ff'], [2.77, '#a0522d']
].forEach(function (r) { ray(X0, 316, r[0], r[1], r[2]); });

// fans from the left side of the square
[
  [565, -.175, '#0000ff'], [565, -.0875, '#228b22'], [565, .0885, '#228b22'], [565, .1315, '#000'],
  [565, .1763, '#0000ff', 2], [565, .2195, '#3cb371'], [565, .263, '#000'], [565, .3535, '#ff0000', 2],
  [649, -.3535, '#ff0000', 2], [649, .3525, '#ff0000', 2],
  [815, -.176, '#0000ff'], [815, -.3525, '#ff0000', 2], [815, .1315, '#000'], [815, .1755, '#0000ff'],
  [815, .3515, '#ff0000', 2], [815, 1.39, '#228b22']
].forEach(function (r) { ray(X0, r[0], r[1], r[2], r[3]); });

[
  [X0, 565, 1740, 316, '#ff0000', 2], [X0, 815, 1740, 316, '#0000ff'], [1389, 565, RIGHT, 399, '#ff0000', 2],
  [1220, 316, RIGHT, 547, '#ff0000', 2], [1293, 949, 1740, 316, '#228b22'], [1167, 949, 1395, 316, '#a0522d'],
  [1395, 316, RIGHT, 399, '#0000ff', 2], [1395, 316, RIGHT, 482, '#0000ff', 2], [1395, 316, RIGHT, 647, '#0000ff'],
  [1740, 316, RIGHT, 338, '#0000ff', 2], [1740, 316, RIGHT, 359, '#ff0000', 2], [1740, 316, RIGHT, 489, '#228b22'],
  [1047, 441, RIGHT, 404, '#a0522d'], [1382, 949, RIGHT, 440, '#ff00ff'], [1422, 949, RIGHT, 533, '#000'],
  [1553, 949, RIGHT, 732, '#0000ff'], [1727, 949, RIGHT, 878, '#ffd700', 2], [1700, 949, RIGHT, 921, '#0000ff'],
  [1743, 815, RIGHT, 763, '#ff00ff'], [1813, 949, RIGHT, 922, '#000']
].forEach(function (l) { line.apply(null, l); });

ray(X0, 316, .6844, '#800000', 5);
ray(X0, 316, 1.04, '#800000', 5);
[[1035, 315], [1125, 375], [1215, 435], [1211, 498]].forEach(function (p) {
  box(p[0] - 4, p[1] - 4, 8, 8, '#800000');
});

levels.forEach(function (l) { line(X0, l[0], RIGHT - 1, l[0], '#000'); });
times.forEach(function (t) { line(t[0], TOP, t[0], BOTTOM, '#000'); });

candles.forEach(function (c, i) {
  var x = 11 + i * 8;
  line(x, c[0], x, c[3], '#000');
  out.push('<rect x="' + (x - 2) + '" y="' + c[1] + '" width="4" height="' + (c[2] - c[1]) +
    '" fill="' + (c[4] ? '#008000' : '#800000') + '" stroke="#000"/>');
});

// zigzag
out.push('<polyline fill="none" stroke="#000" stroke-width="4" stroke-linejoin="round" points="10,650 50,627 235,776 476,529 ' +
  '684,720 716,628 787,730 1035,317 1204,487 1228,430 1316,549 1348,484 1403,593"/>');

// arrow with its selection frame
out.push('<path fill="none" stroke="#0000ff" d="M1022 314h26v34h-26z"/>');
out.push('<path fill="none" stroke="#6a5acd" d="M1032 339v-12h-3l6-7 6 7h-3v12z"/>');

// red marker lines
line(X0, 246, RIGHT, 246, '#ff0000', 1, 'stroke-dasharray="3 3"');
box(10, 251, 1853, 4, '#ff0000');
box(10, 623, 1853, 4, '#ff0000');
line(10, 630, RIGHT, 630, '#ff0000');
box(1441, TOP, 4, 814, '#ff0000');
box(9, 621, 8, 8, '#ff0000');
box(1439, 134, 8, 8, '#ff0000');
box(1439, 943, 8, 8, '#ff0000');
out.push('</g>');

// frame and ticks
out.push('<path shape-rendering="crispEdges" fill="none" stroke="#000" d="M10 135H1863V949H10z"/>');

out.push('<g clip-path="url(#plot)">');
levels.forEach(function (l) {
  text(1862, l[0] - 3, l[1], 'class="level" text-anchor="end"');
});
times.forEach(function (t) {
  var x = t[0] - 6;
  text(0, 0, '. ' + t[1], 'class="level" transform="translate(' + x + ' 246) rotate(-90)"');
  text(0, 0, '. ' + (t[2] || t[1]), 'class="level" transform="translate(' + x + ' 948) rotate(-90)"');
});
text(15, 149, 'GBPUSD.fx,M5&#160; 1.34975 1.34995 1.34965 1.34965');
out.push('</g>');

// price axis
[
  [157, '1.35590'], [209, '1.35515'], [261, '1.35440'], [313, '1.35365'], [362, '1.35295'], [414, '1.35220'],
  [466, '1.35145'], [518, '1.35070'], [570, '1.34995'], [674, '1.34845'], [726, '1.34770'],
  [778, '1.34695'], [827, '1.34625'], [879, '1.34550'], [928, '1.34480']
].forEach(function (p) {
  line(1863, p[0], 1866, p[0], '#000', 1, 'shape-rendering="crispEdges"');
  text(1870, p[0] + 4, p[1]);
});
function tag(y, str, color) {
  box(1865, y, 60, 14, color);
  text(1870, y + 11, str, 'fill="#fff"');
}
tag(247, '1.35452', '#ff0000');
tag(584, '1.34965', '#000');
tag(624, '1.34909', '#ff0000');
tag(619, '1.34916', '#ff0000');

// time axis
for (var i = 0; i < 16; i++) {
  var hour = (i + 7 < 10 ? '0' : '') + (i + 7);
  line(11 + i * 96, 949, 11 + i * 96, 952, '#000', 1, 'shape-rendering="crispEdges"');
  text(10 + i * 96, 964, i ? '24 Feb ' + hour + ':45' : '24 Feb 2026');
}
box(1388, 953, 110, 14, '#ff0000');
text(1443, 964, '2026.02.24 22:40', 'fill="#fff" text-anchor="middle"');

out.push('</g>');
svg.innerHTML = out.join('');
```
